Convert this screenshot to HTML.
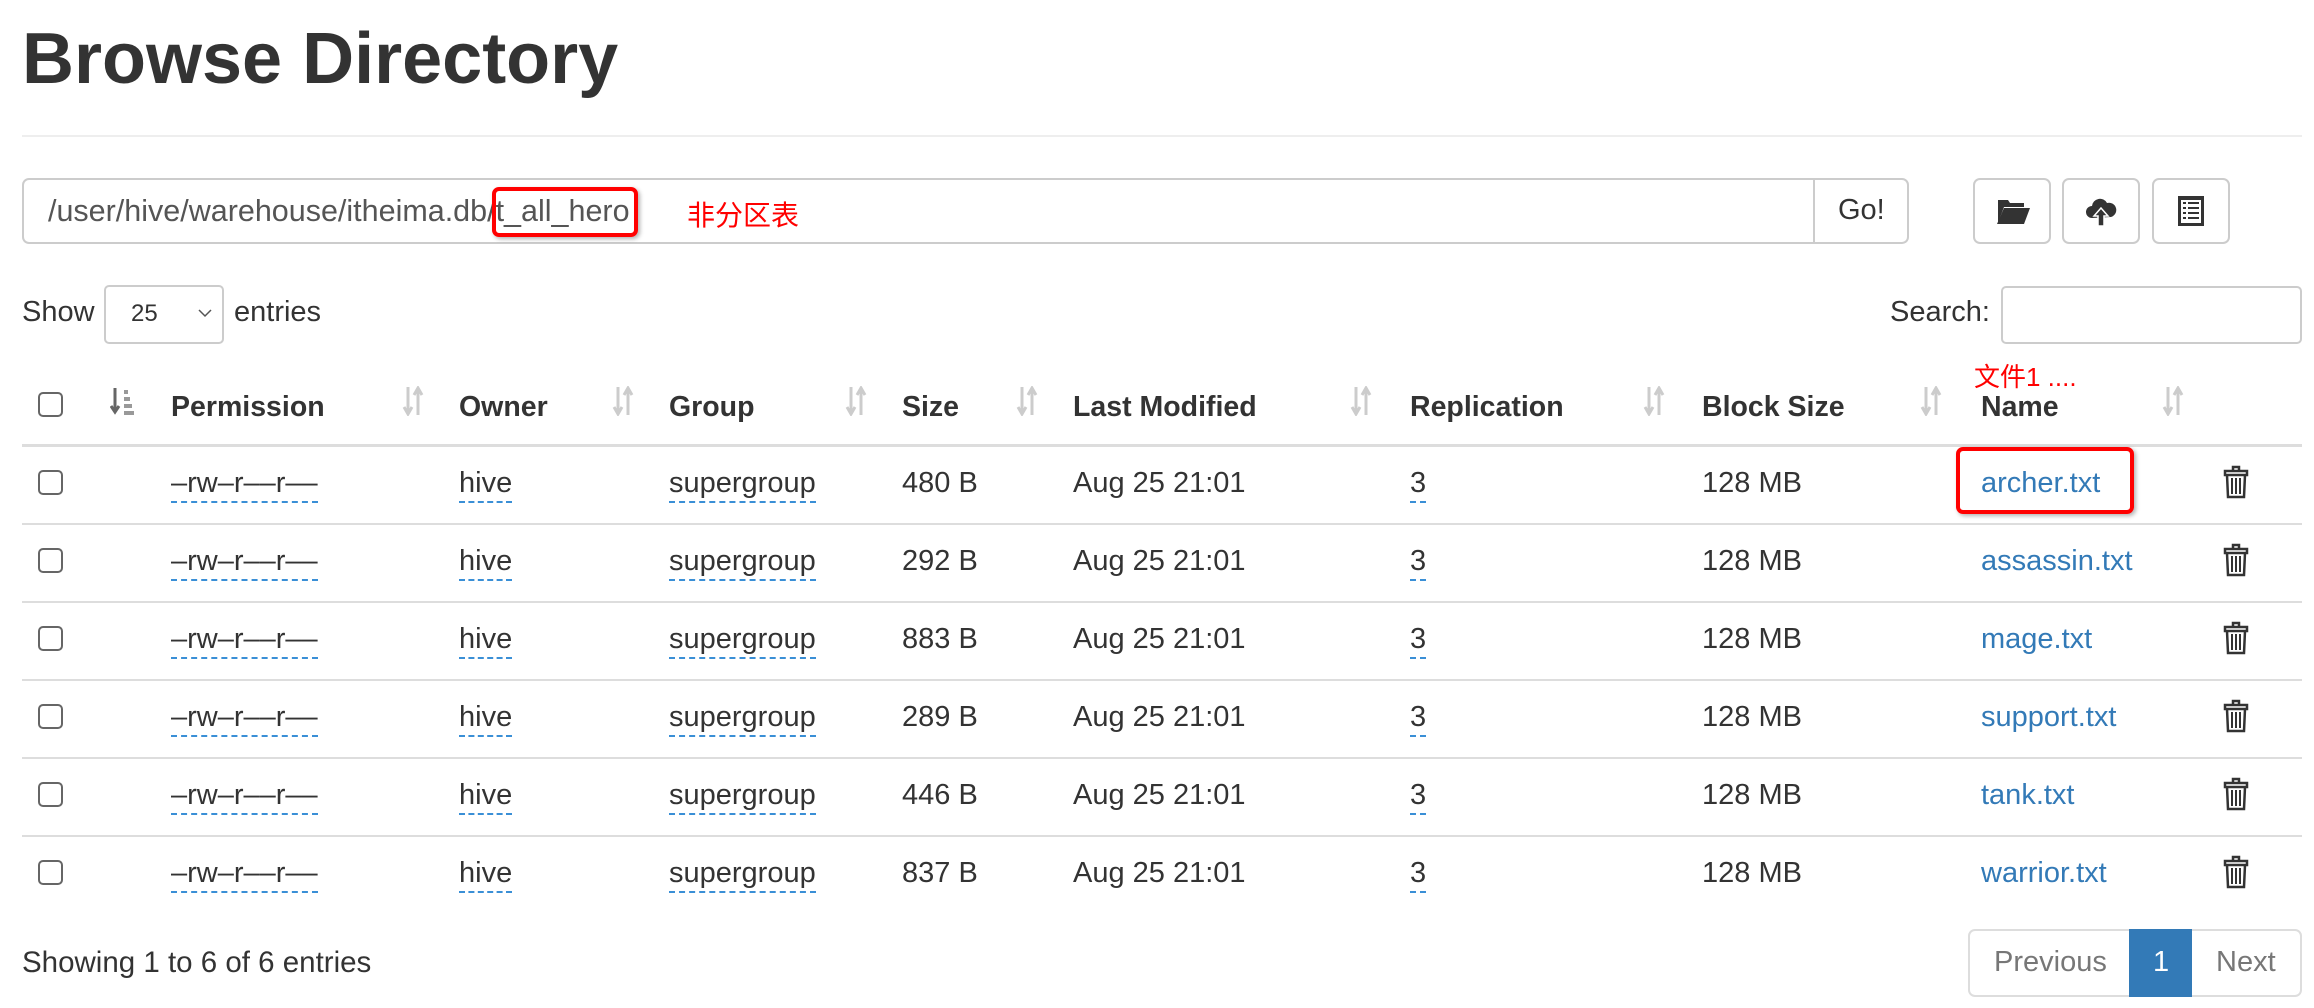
<!DOCTYPE html>
<html><head><meta charset="utf-8"><style>
*{box-sizing:border-box;margin:0;padding:0}
body{width:2314px;height:1008px;background:#fff;font-family:"Liberation Sans","Noto Sans CJK SC",sans-serif;color:#333;font-size:29px;position:relative;overflow:hidden}
.a{position:absolute;white-space:nowrap}
.cb{position:absolute;width:25px;height:25px;border:2px solid #666;border-radius:5px;background:#fff}
.u{border-bottom:2px dashed #3a8fd6;padding-bottom:2px}
.lk{color:#337ab7}
.row{position:absolute;left:22px;width:2280px;border-top:2px solid #ddd}
.btn{position:absolute;border:2px solid #ccc;border-radius:7px;background:#fff}
.h{font-weight:bold;font-size:28.5px}
</style></head><body>
<div class="a" style="left:22px;top:18px;font-size:72px;font-weight:bold;color:#333">Browse Directory</div>
<div class="a" style="left:22px;top:135px;width:2280px;height:2px;background:#eee"></div>

<div class="a" style="left:22px;top:178px;width:1794px;height:66px;border:2px solid #ccc;border-radius:7px 0 0 7px"></div>
<div class="a" style="left:48px;top:194px;font-size:30.5px;color:#555">/user/hive/warehouse/itheima.db/t_all_hero</div>
<div class="a" style="left:492px;top:187px;width:146px;height:50px;border:4px solid #f00;border-radius:7px;box-shadow:2px 2px 4px rgba(0,0,0,.3)"></div>
<div class="a" style="left:687px;top:194px;color:#f00;font-size:28px">非分区表</div>
<div class="btn" style="left:1813px;top:178px;width:96px;height:66px;border-radius:0 7px 7px 0"></div>
<div class="a" style="left:1838px;top:194px;font-size:29px">Go!</div>

<div class="btn" style="left:1973px;top:178px;width:78px;height:66px"></div>
<svg class="a" style="left:1996px;top:197px" width="34" height="28" viewBox="0 0 34 28"><path d="M2 3h10l2 3h14v4H8L2 26z" fill="#333"/><path d="M8 11h26l-6 16H1z" fill="#333"/></svg>
<div class="btn" style="left:2062px;top:178px;width:78px;height:66px"></div>
<svg class="a" style="left:2085px;top:196px" width="32" height="32" viewBox="0 0 32 32"><path d="M7 22a6 6 0 0 1 0-12a8 8 0 0 1 15-3a7 7 0 0 1 4 14z" fill="#333"/><path d="M16 12l-7 8h4v10h6V20h4z" fill="#333" stroke="#fff" stroke-width="1.5"/></svg>
<div class="btn" style="left:2152px;top:178px;width:78px;height:66px"></div>
<svg class="a" style="left:2178px;top:196px" width="26" height="30" viewBox="0 0 26 30"><rect x="0" y="0" width="26" height="30" fill="#333"/><rect x="3" y="4" width="20" height="23" fill="#fff"/><g fill="#333"><rect x="5" y="6" width="3" height="2"/><rect x="10" y="6" width="11" height="2"/><rect x="5" y="11" width="3" height="2"/><rect x="10" y="11" width="11" height="2"/><rect x="5" y="16" width="3" height="2"/><rect x="10" y="16" width="11" height="2"/><rect x="5" y="21" width="3" height="2"/><rect x="10" y="21" width="11" height="2"/></g></svg>

<div class="a" style="left:22px;top:296px">Show</div>
<div class="a" style="left:104px;top:285px;width:120px;height:59px;border:2px solid #ccc;border-radius:5px"></div>
<div class="a" style="left:131px;top:300px;font-size:24px">25</div>
<svg class="a" style="left:198px;top:308px" width="14" height="10" viewBox="0 0 14 10"><path d="M1 2l6 6 6-6" stroke="#555" stroke-width="1.5" fill="none"/></svg>
<div class="a" style="left:234px;top:296px">entries</div>
<div class="a" style="left:1890px;top:296px">Search:</div>
<div class="a" style="left:2001px;top:286px;width:301px;height:58px;border:2px solid #ccc;border-radius:5px"></div>

<div class="a" style="left:1974px;top:357px;color:#f00;font-size:26px">文件1 ....</div>

<div class="cb" style="left:38px;top:392px"></div>
<svg class="a" style="left:110px;top:388px" width="26" height="28" viewBox="0 0 26 28"><path d="M5 0v22M1 18l4 6 4-6" stroke="#666" stroke-width="3" fill="none"/><g fill="#999"><rect x="14" y="2" width="4" height="4"/><rect x="14" y="9" width="6" height="4"/><rect x="14" y="16" width="8" height="4"/><rect x="14" y="23" width="10" height="4"/></g></svg>
<div class="a h" style="left:171px;top:391px">Permission</div>
<div class="a h" style="left:459px;top:391px">Owner</div>
<div class="a h" style="left:669px;top:391px">Group</div>
<div class="a h" style="left:902px;top:391px">Size</div>
<div class="a h" style="left:1073px;top:391px">Last Modified</div>
<div class="a h" style="left:1410px;top:391px">Replication</div>
<div class="a h" style="left:1702px;top:391px">Block Size</div>
<div class="a h" style="left:1981px;top:391px">Name</div>
<div id="sorts"></div>
<div class="row" style="top:444px;border-top:3px solid #ddd"></div>

<div id="rows"></div>
<div class="row" style="top:523px"></div>
<div class="row" style="top:601px"></div>
<div class="row" style="top:679px"></div>
<div class="row" style="top:757px"></div>
<div class="row" style="top:835px"></div>

<div class="a" style="left:1956px;top:447px;width:178px;height:67px;border:4px solid #f00;border-radius:7px;box-shadow:2px 2px 4px rgba(0,0,0,.3)"></div>

<script>
var s="";[402,612,845,1016,1350,1643,1920,2162].forEach(function(x){
s+='<svg class="a" style="left:'+x+'px;top:386px" width="22" height="30" viewBox="0 0 22 30"><path d="M6 1v26M2 21l4 7 4-7" stroke="#ccc" stroke-width="3" fill="none"/><path d="M16 29V3M12 9l4-7 4 7" stroke="#ccc" stroke-width="3" fill="none"/></svg>';});
document.getElementById("sorts").outerHTML=s;
var d=[["480 B","archer.txt"],["292 B","assassin.txt"],["883 B","mage.txt"],["289 B","support.txt"],["446 B","tank.txt"],["837 B","warrior.txt"]];
var h="";
d.forEach(function(r,i){var t=467+i*78;
h+='<div class="cb" style="left:38px;top:'+(t+3)+'px"></div>'+
'<div class="a" style="left:171px;top:'+t+'px"><span class="u">–rw–r––r––</span></div>'+
'<div class="a" style="left:459px;top:'+t+'px"><span class="u">hive</span></div>'+
'<div class="a" style="left:669px;top:'+t+'px"><span class="u">supergroup</span></div>'+
'<div class="a" style="left:902px;top:'+t+'px">'+r[0]+'</div>'+
'<div class="a" style="left:1073px;top:'+t+'px">Aug 25 21:01</div>'+
'<div class="a" style="left:1410px;top:'+t+'px"><span class="u">3</span></div>'+
'<div class="a" style="left:1702px;top:'+t+'px">128 MB</div>'+
'<div class="a lk" style="left:1981px;top:'+t+'px">'+r[1]+'</div>'+
'<svg class="a" style="left:2223px;top:'+(t-2)+'px" width="26" height="34" viewBox="0 0 26 34"><g fill="none" stroke="#333" stroke-width="2.5"><path d="M10 5V2h6v3"/><path d="M2 6h22v4H2z"/><path d="M4 10l1 22h16l1-22"/><path d="M9 13v16M13 13v16M17 13v16" stroke-width="2"/></g></svg>';});
document.getElementById("rows").outerHTML=h;
</script>

<div class="a" style="left:22px;top:946px;font-size:29.5px">Showing 1 to 6 of 6 entries</div>
<div class="a" style="left:1968px;top:929px;width:334px;height:68px;border:2px solid #ddd;border-radius:7px"></div>
<div class="a" style="left:2129px;top:929px;width:63px;height:68px;background:#337ab7"></div>
<div class="a" style="left:1994px;top:946px;color:#777">Previous</div>
<div class="a" style="left:2153px;top:946px;color:#fff">1</div>
<div class="a" style="left:2216px;top:946px;color:#777">Next</div>
</body></html>
